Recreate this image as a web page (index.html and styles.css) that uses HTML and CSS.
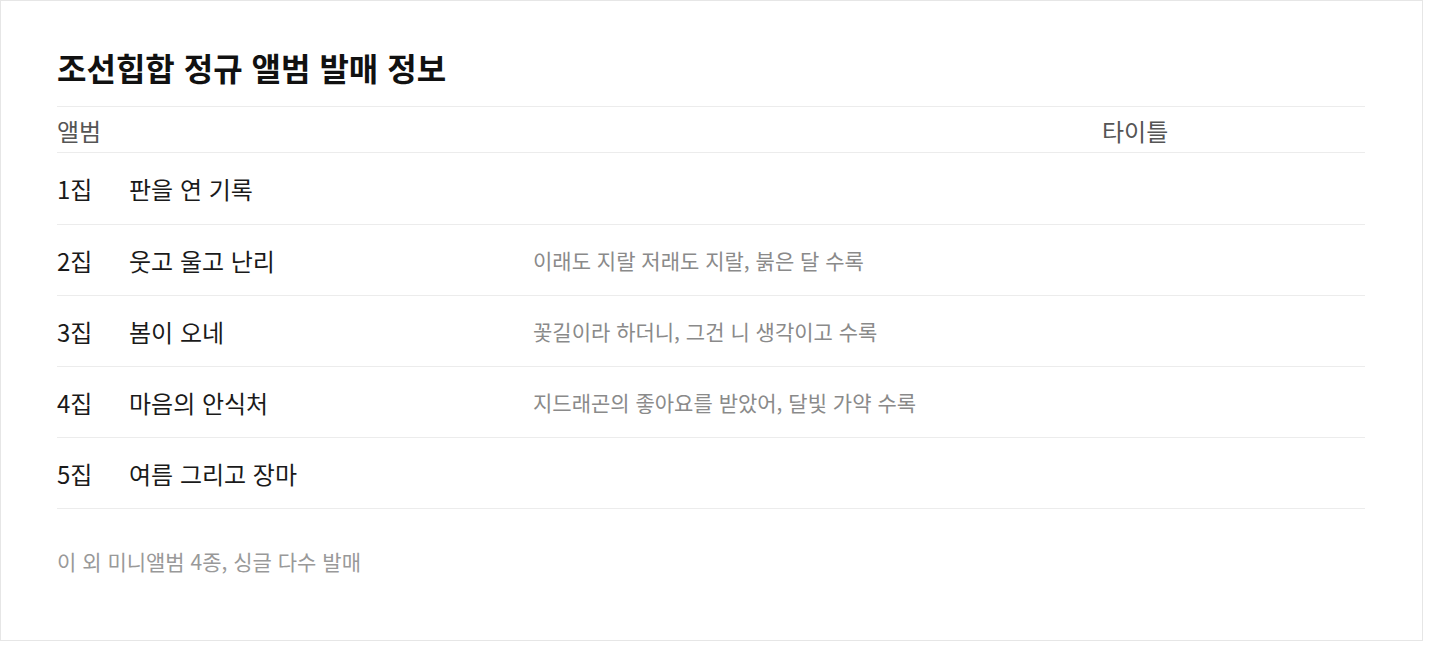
FILE: index.html
```html
<!DOCTYPE html>
<html lang="ko">
<head>
<meta charset="utf-8">
<title>조선힙합 정규 앨범 발매 정보</title>
<link rel="stylesheet" href="styles.css">
</head>
<body>
<section class="card">
  <h1 class="title">조선힙합 정규 앨범 발매 정보</h1>
  <div class="table">
    <div class="row head">
      <div class="cell span3">앨범</div>
      <div class="cell">타이틀</div>
    </div>
    <div class="row first">
      <div class="cell num">1집</div>
      <div class="cell name">판을 연 기록</div>
      <div class="cell track"></div>
      <div class="cell"></div>
    </div>
    <div class="row">
      <div class="cell num">2집</div>
      <div class="cell name">웃고 울고 난리</div>
      <div class="cell track">이래도 지랄 저래도 지랄, 붉은 달 수록</div>
      <div class="cell"></div>
    </div>
    <div class="row">
      <div class="cell num">3집</div>
      <div class="cell name">봄이 오네</div>
      <div class="cell track">꽃길이라 하더니, 그건 니 생각이고 수록</div>
      <div class="cell"></div>
    </div>
    <div class="row">
      <div class="cell num">4집</div>
      <div class="cell name">마음의 안식처</div>
      <div class="cell track">지드래곤의 좋아요를 받았어, 달빛 가약 수록</div>
      <div class="cell"></div>
    </div>
    <div class="row">
      <div class="cell num">5집</div>
      <div class="cell name">여름 그리고 장마</div>
      <div class="cell track"></div>
      <div class="cell"></div>
    </div>
  </div>
  <p class="note">이 외 미니앨범 4종, 싱글 다수 발매</p>
</section>
</body>
</html>
```

FILE: styles.css
```css
html, body {
  margin: 0;
  padding: 0;
  background: #ffffff;
}

body {
  font-family: "Noto Sans CJK KR", "Noto Sans", sans-serif;
  color: #1a1a1a;
}

.card {
  box-sizing: border-box;
  width: 1423px;
  height: 641px;
  border: 1px solid #e6e6e6;
  padding: 44px 57px 0 56px;
  background: #fff;
}

.title {
  margin: 0 0 17px;
  font-size: 32px;
  line-height: 44px;
  font-weight: 700;
  color: #111;
}

.table {
  border-top: 1px solid #ececec;
}

.row {
  display: grid;
  grid-template-columns: 72px 404px 569px 1fr;
  align-items: center;
  height: 70px;
  border-bottom: 1px solid #ececec;
}

.row.first {
  height: 71px;
}

.row.head {
  box-sizing: border-box;
  height: 46px;
  padding-top: 2px;
  font-size: 24px;
  line-height: 32px;
  color: #555;
}

.span3 {
  grid-column: span 3;
}

.cell {
  white-space: nowrap;
}

.num, .name {
  font-size: 24px;
  color: #1a1a1a;
}

.track {
  font-size: 21px;
  color: #8a8a8a;
}

.note {
  margin: 37px 0 0;
  font-size: 21px;
  line-height: 30px;
  color: #999;
}
```
